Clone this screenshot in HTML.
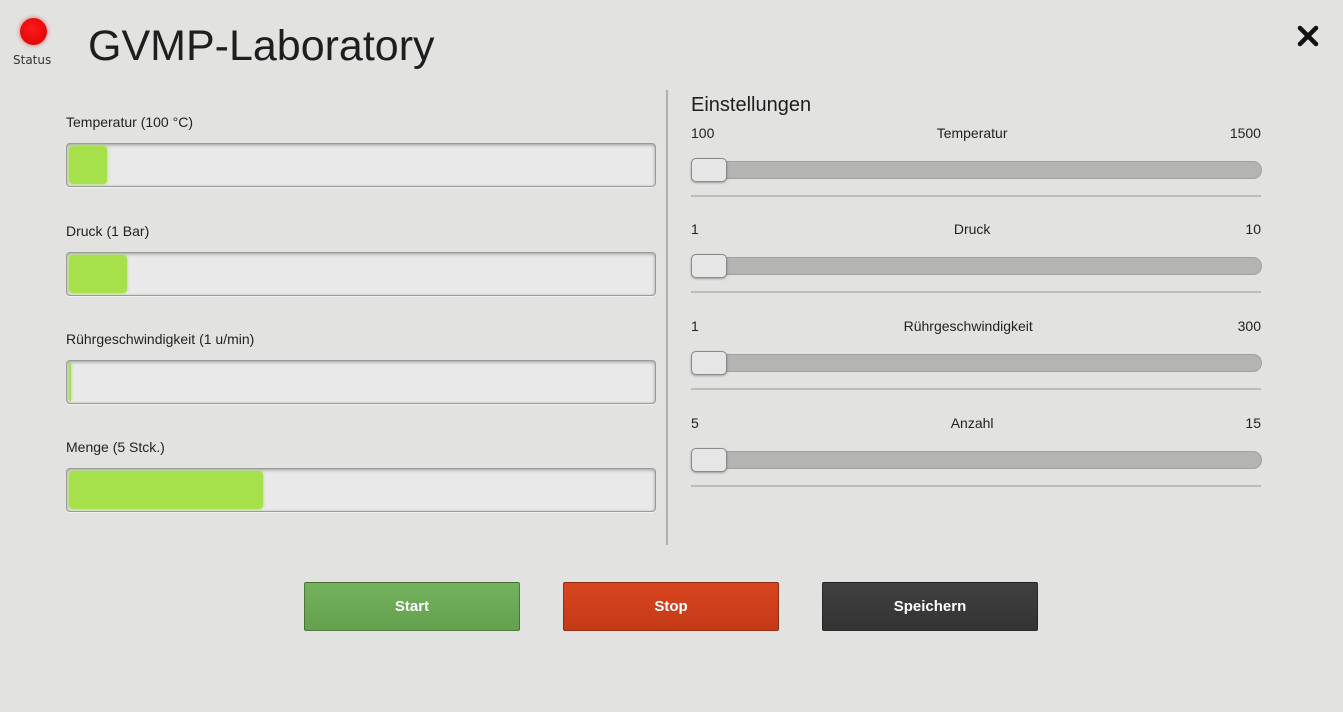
<!DOCTYPE html><html><head><style>
body{margin:0;width:1343px;height:712px;background:#e2e2e1;font-family:"Liberation Sans",sans-serif;position:relative;overflow:hidden;color:#222}
.a{position:absolute}
.lbl{font-size:14px;color:#222}
.bar{position:absolute;left:66px;width:588px;height:42px;border:1px solid #9a9a9a;border-radius:4px;background:#e9e9e9;box-shadow:inset 0 1px 3px rgba(0,0,0,.35),0 1px 1px rgba(255,255,255,.6)}
.fill{position:absolute;left:2px;top:2px;bottom:2px;background:#a6e04a;border-radius:4px;box-shadow:0 0 3px #a6e04a}
.trk{position:absolute;left:691px;width:569px;height:16px;background:#b4b4b3;border:1px solid #a0a0a0;border-radius:9px}
.th{position:absolute;left:691px;width:34px;height:22px;background:#e6e6e6;border:1px solid #8a8a8a;border-radius:5px;box-shadow:0 1px 2px rgba(0,0,0,.3)}
.ln{position:absolute;left:691px;width:570px;height:2px;background:#bcbcbc}
.sl{position:absolute;left:691px;width:570px;font-size:14px;display:flex;justify-content:space-between}
.btn{position:absolute;top:582px;width:214px;height:47px;border:1px solid rgba(0,0,0,.3);border-radius:2px;color:#fff;font-size:15px;font-weight:bold;display:flex;align-items:center;justify-content:center}
</style></head><body>
<div class="a" style="left:20px;top:18px;width:27px;height:27px;border-radius:50%;background:radial-gradient(circle at 45% 40%,#ff1a1a,#d40000);box-shadow:0 0 5px rgba(220,0,0,.6)"></div>
<div class="a" style="left:13px;top:53px;font-size:12px;font-family:'DejaVu Sans',sans-serif;color:#333">Status</div>
<div class="a" style="left:88px;top:22px;font-size:43px;color:#1e1e1e">GVMP-Laboratory</div>
<svg class="a" style="left:1297px;top:25px" width="22" height="22" viewBox="0 0 22 22"><path d="M3 3L19 19M19 3L3 19" stroke="#111" stroke-width="4.5" stroke-linecap="round"/></svg>

<div class="a lbl" style="left:66px;top:114px">Temperatur (100 °C)</div>
<div class="bar" style="top:143px"><div class="fill" style="width:38px"></div></div>
<div class="a lbl" style="left:66px;top:223px">Druck (1 Bar)</div>
<div class="bar" style="top:252px"><div class="fill" style="width:58px"></div></div>
<div class="a lbl" style="left:66px;top:331px">Rührgeschwindigkeit (1 u/min)</div>
<div class="bar" style="top:360px"><div class="fill" style="width:2px"></div></div>
<div class="a lbl" style="left:66px;top:439px">Menge (5 Stck.)</div>
<div class="bar" style="top:468px"><div class="fill" style="width:194px"></div></div>

<div class="a" style="left:666px;top:90px;width:2px;height:455px;background:#b0b0b0"></div>
<div class="a" style="left:691px;top:94px;font-size:20px;color:#1e1e1e">Einstellungen</div>

<div class="sl" style="top:125px"><span>100</span><span>Temperatur</span><span>1500</span></div>
<div class="trk" style="top:161px"></div><div class="th" style="top:158px"></div><div class="ln" style="top:195px"></div>
<div class="sl" style="top:221px"><span>1</span><span>Druck</span><span>10</span></div>
<div class="trk" style="top:257px"></div><div class="th" style="top:254px"></div><div class="ln" style="top:291px"></div>
<div class="sl" style="top:318px"><span>1</span><span>Rührgeschwindigkeit</span><span>300</span></div>
<div class="trk" style="top:354px"></div><div class="th" style="top:351px"></div><div class="ln" style="top:388px"></div>
<div class="sl" style="top:415px"><span>5</span><span>Anzahl</span><span>15</span></div>
<div class="trk" style="top:451px"></div><div class="th" style="top:448px"></div><div class="ln" style="top:485px"></div>

<div class="btn" style="left:304px;background:linear-gradient(#74b25d,#64a04e)">Start</div>
<div class="btn" style="left:563px;background:linear-gradient(#d8451f,#c43a17)">Stop</div>
<div class="btn" style="left:822px;background:linear-gradient(#404040,#333)">Speichern</div>
</body></html>
